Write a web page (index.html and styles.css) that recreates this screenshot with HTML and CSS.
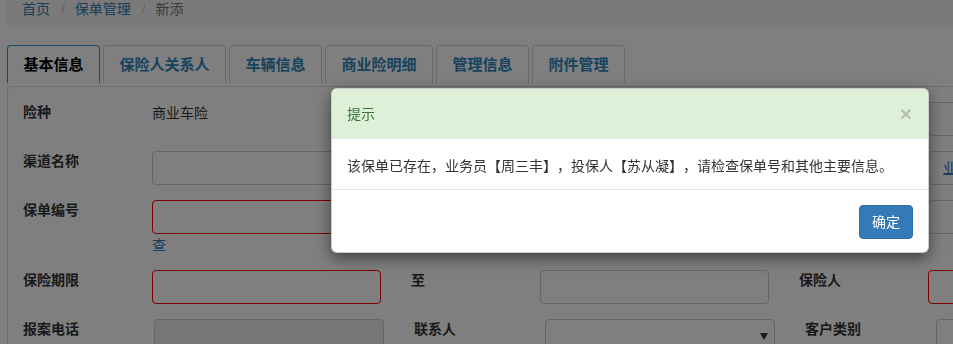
FILE: index.html
```html
<!DOCTYPE html>
<html lang="zh-CN">
<head>
  <meta charset="UTF-8" />
  <meta name="viewport" content="width=device-width, initial-scale=1" />
  <title>新添保单 | 保单管理</title>
  <link rel="stylesheet" href="styles.css">
</head>
<body>

  <div class="page">
    <ol class="breadcrumb">
      <li><a href="#">首页</a></li>
      <li><a href="#">保单管理</a></li>
      <li class="active">新添</li>
    </ol>

    <ul class="nav-tabs">
      <li class="active"><a href="#">基本信息</a></li>
      <li><a href="#">保险人关系人</a></li>
      <li><a href="#">车辆信息</a></li>
      <li><a href="#">商业险明细</a></li>
      <li><a href="#">管理信息</a></li>
      <li><a href="#">附件管理</a></li>
    </ul>

    <div class="tab-panel">
      <div class="form-row">
        <div class="group">
          <label class="label">险种</label>
          <div class="control"><p class="static">商业车险</p></div>
        </div>
        <div class="group">
          <label class="label"></label>
          <div class="control"><input class="input" type="text" /></div>
        </div>
        <div class="group">
          <label class="label"></label>
          <div class="control"><input class="input" type="text" /></div>
        </div>
      </div>

      <div class="form-row">
        <div class="group">
          <label class="label">渠道名称</label>
          <div class="control"><input class="input" type="text" /></div>
        </div>
        <div class="group">
          <label class="label"></label>
          <div class="control"><input class="input" type="text" /></div>
        </div>
        <div class="group">
          <label class="label"></label>
          <div class="control"><div class="input link-box"><a href="#">业务员</a></div></div>
        </div>
      </div>

      <div class="form-row">
        <div class="group">
          <label class="label">保单编号</label>
          <div class="control">
            <input class="input invalid" type="text" />
            <a class="help-link" href="#">查</a>
          </div>
        </div>
        <div class="group">
          <label class="label"></label>
          <div class="control"><input class="input" type="text" /></div>
        </div>
        <div class="group">
          <label class="label"></label>
          <div class="control"><input class="input" type="text" /></div>
        </div>
      </div>

      <div class="form-row">
        <div class="group">
          <label class="label">保险期限</label>
          <div class="control"><input class="input invalid" type="text" /></div>
        </div>
        <div class="group">
          <label class="label">至</label>
          <div class="control"><input class="input" type="text" /></div>
        </div>
        <div class="group">
          <label class="label">保险人</label>
          <div class="control"><input class="input invalid" type="text" /></div>
        </div>
      </div>

      <div class="form-row wide">
        <div class="group">
          <label class="label">报案电话</label>
          <div class="control"><input class="input" type="text" disabled /></div>
        </div>
        <div class="group">
          <label class="label">联系人</label>
          <div class="control select-wrap">
            <select class="input">
              <option></option>
            </select>
          </div>
        </div>
        <div class="group">
          <label class="label">客户类别</label>
          <div class="control"><input class="input" type="text" /></div>
        </div>
      </div>
    </div>
  </div>

  <!-- duplicate policy warning -->
  <div class="backdrop"></div>
  <div class="modal">
    <div class="modal-header">
      <span class="modal-title">提示</span>
      <button class="close" type="button">&times;</button>
    </div>
    <div class="modal-body">
      该保单已存在，业务员【周三丰】，投保人【苏从凝】，请检查保单号和其他主要信息。
    </div>
    <div class="modal-footer">
      <button class="btn-primary" type="button">确定</button>
    </div>
  </div>

</body>
</html>
```

FILE: styles.css
```css
html, body {
  margin: 0;
  overflow: hidden;
}
body {
  font-family: 'Liberation Sans', 'Noto Sans CJK SC', sans-serif;
  font-size: 14px;
  line-height: 20px;
  color: #333;
  background: #fff;
  text-spacing-trim: space-all;
}
a {
  color: #337ab7;
  text-decoration: none;
}
.page {
  width: 1200px;
  padding-left: 7px;
}

/* breadcrumb */
.breadcrumb {
  list-style: none;
  margin: -9px 0 18px;
  padding: 8px 15px;
  background: #f5f5f5;
  border-radius: 4px;
  display: flex;
}
.breadcrumb li + li:before {
  content: "/\00a0";
  padding: 0 6px 0 11px;
  color: #ccc;
}
.breadcrumb .active {
  color: #777;
}

/* tabs */
.nav-tabs {
  list-style: none;
  margin: 0 0 3px;
  padding: 0;
  display: flex;
  gap: 3px;
}
.nav-tabs a {
  display: block;
  padding: 9px 15.5px 8px;
  border: 1px solid #d4d4d4;
  border-bottom: 0;
  border-radius: 4px 4px 0 0;
  font-size: 15px;
  font-weight: bold;
  color: #2f86bb;
}
.nav-tabs .active a {
  border-color: #3a8fc4;
  color: #000;
}

/* form panel */
.tab-panel {
  border: 1px solid #ddd;
  border-radius: 4px;
  padding: 15px;
  min-height: 300px;
}
.form-row {
  display: flex;
  margin-bottom: 15px;
}
.group {
  display: flex;
  width: 388px;
  flex: none;
}
.label {
  width: 129px;
  flex: none;
  font-weight: bold;
  color: #333;
}
.control {
  width: 229px;
}
.static {
  margin: 0;
  padding-top: 1px;
}
.input {
  display: block;
  box-sizing: border-box;
  width: 100%;
  height: 34px;
  margin: 0;
  padding: 6px 12px;
  border: 1px solid #ccc;
  border-radius: 4px;
  background: #fff;
  font: inherit;
}
.input.invalid {
  border-color: #ff0000;
}
.input:disabled {
  background: #eee;
}
.link-box {
  padding-left: 14px;
}
.link-box a {
  text-decoration: underline;
}
.help-link {
  display: block;
  margin-top: 1px;
}
.wide .group {
  width: 391px;
}
.wide .label {
  width: 131px;
}
.wide .control {
  width: 230px;
}
.select-wrap {
  position: relative;
}
.select-wrap select {
  appearance: none;
}
.select-wrap:after {
  content: "";
  position: absolute;
  right: 7px;
  top: 14px;
  border-left: 4px solid transparent;
  border-right: 4px solid transparent;
  border-top: 7px solid #333;
}

/* modal */
.backdrop {
  position: fixed;
  top: 0;
  left: 0;
  right: 0;
  bottom: 0;
  background: rgba(0, 0, 0, 0.5);
}
.modal {
  position: absolute;
  left: 331px;
  top: 88px;
  width: 598px;
  box-sizing: border-box;
  background: #fff;
  border: 1px solid rgba(0, 0, 0, 0.2);
  border-radius: 6px;
  box-shadow: 0 5px 15px rgba(0, 0, 0, 0.5);
  overflow: hidden;
}
.modal-header {
  display: flex;
  justify-content: space-between;
  align-items: center;
  padding: 14px 15px;
  background: #dff0d8;
  color: #3c763d;
  border-bottom: 1px solid #e5e5e5;
}
.close {
  padding: 0;
  border: 0;
  background: none;
  font-family: 'Liberation Sans', sans-serif;
  font-size: 21px;
  font-weight: bold;
  line-height: 1;
  color: #000;
  opacity: 0.2;
  margin-right: 1px;
}
.modal-body {
  padding: 17px 15px 13px;
}
.modal-footer {
  display: flex;
  justify-content: flex-end;
  padding: 15px 15px 13px;
  border-top: 1px solid #e5e5e5;
}
.btn-primary {
  padding: 6px 12px;
  border: 1px solid #2e6da4;
  border-radius: 4px;
  background: #337ab7;
  color: #fff;
  font: inherit;
}
```
